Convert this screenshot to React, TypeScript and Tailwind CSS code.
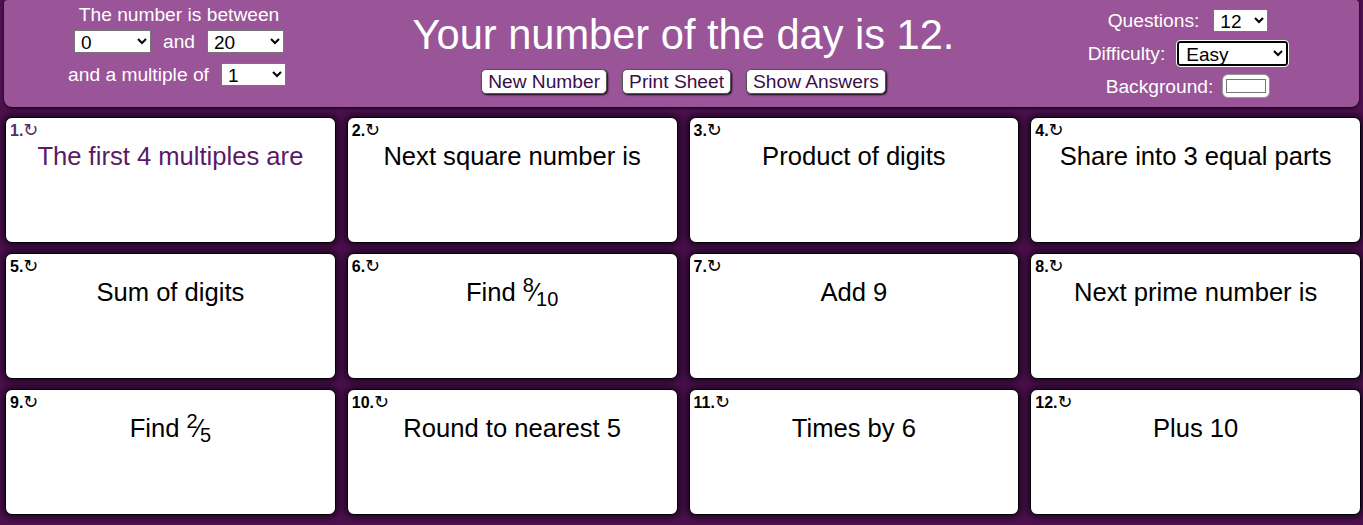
import React from 'react';

type Question = { text: React.ReactNode; active?: boolean };

// fraction like 8⁄10 with raised numerator and lowered denominator
function Frac({ n, d }: { n: number; d: number }) {
  return (
    <span>
      <span className="text-[20px] relative -top-[9px]">{n}</span>
      <span className="text-[25px] -mx-[1px]">&frasl;</span>
      <span className="text-[20px] relative top-[5px]">{d}</span>
    </span>
  );
}

const questions: Question[] = [
  { text: 'The first 4 multiples are', active: true },
  { text: 'Next square number is' },
  { text: 'Product of digits' },
  { text: 'Share into 3 equal parts' },
  { text: 'Sum of digits' },
  { text: <>Find <Frac n={8} d={10} /></> },
  { text: 'Add 9' },
  { text: 'Next prime number is' },
  { text: <>Find <Frac n={2} d={5} /></> },
  { text: 'Round to nearest 5' },
  { text: 'Times by 6' },
  { text: 'Plus 10' },
];

function Select({ value, options, className }: { value: string; options: string[]; className: string }) {
  return (
    <select
      defaultValue={value}
      className={`bg-white text-black text-[19px] leading-none h-[23px] pl-[2px] border border-[#767676] ${className}`}
    >
      {options.map((o) => (
        <option key={o}>{o}</option>
      ))}
    </select>
  );
}

function HeaderButton({ children }: { children: React.ReactNode }) {
  return (
    <button className="bg-white text-[#3b0f49] text-[19.2px] leading-[23px] px-[6px] rounded-[5px] border border-[#555] shadow-[1px_1px_2px_rgba(0,0,0,0.9)]">
      {children}
    </button>
  );
}

export default function App() {
  return (
    <div
      className="min-h-screen bg-[#4d1150] px-[4px] pb-2"
      style={{ fontFamily: '"Liberation Sans", Arial, sans-serif' }}
    >
      {/* Header */}
      <div className="grid grid-cols-[346px_1fr_342px] h-[107px] bg-[#995598] rounded-b-[8px] rounded-t-[4px] shadow-[0_1px_3px_rgba(0,0,0,0.9)] text-white text-[19.2px] leading-[23px]">
        <div className="flex flex-col items-center pt-[3px] pl-1">
          <div>The number is between</div>
          <div className="flex items-center gap-[12px] mt-[4px]">
            <Select value="0" options={['0', '10', '20']} className="w-[77px]" />
            <span>and</span>
            <Select value="20" options={['20', '50', '100']} className="w-[77px]" />
          </div>
          <div className="flex items-center gap-[12px] mt-[10px] -ml-1">
            <span>and a multiple of</span>
            <Select value="1" options={['1', '2', '5', '10']} className="w-[65px]" />
          </div>
        </div>

        <div className="flex flex-col items-center">
          <h1 className="text-[41.6px] leading-[46px] mt-[12px]">Your number of the day is 12.</h1>
          <div className="flex gap-[15px] mt-[11px]">
            <HeaderButton>New Number</HeaderButton>
            <HeaderButton>Print Sheet</HeaderButton>
            <HeaderButton>Show Answers</HeaderButton>
          </div>
        </div>

        <div className="flex flex-col items-center pt-[9px]">
          <div className="flex items-center gap-[14px]">
            <span>Questions:</span>
            <Select value="12" options={['4', '8', '12']} className="w-[55px]" />
          </div>
          <div className="flex items-center gap-[12px] mt-[9px]">
            <span>Difficulty:</span>
            <select
              defaultValue="Easy"
              className="bg-white text-black text-[19px] leading-none h-[25px] w-[111px] pl-[3px] border-2 border-black rounded-[3px] outline outline-1 outline-white"
            >
              <option>Easy</option>
              <option>Medium</option>
              <option>Hard</option>
            </select>
          </div>
          <div className="flex items-center gap-[9px] mt-[8px]">
            <span>Background:</span>
            <div className="w-[48px] h-[24px] bg-white rounded-[6px] border border-[#999] flex items-center justify-center">
              <div className="w-[40px] h-[14px] border border-[#777] bg-white" />
            </div>
          </div>
        </div>
      </div>

      {/* Question cards */}
      <div className="grid grid-cols-4 gap-x-[11px] gap-y-[10px] mt-[10px] ml-[1px] -mr-[2px]">
        {questions.map((q, i) => (
          <div
            key={i}
            className="h-[126px] bg-white rounded-[7px] border border-black shadow-[0_0_7px_3px_rgba(20,0,20,0.75)] px-[4px] pt-[2px]"
          >
            <div className={`text-[16px] font-bold leading-[20px] ${q.active ? 'text-[#5a2a66]' : 'text-black'}`}>
              {i + 1}.<span className="font-normal text-[18px]" style={{ fontFamily: '"DejaVu Sans", sans-serif' }}>↻</span>
            </div>
            <div
              className={`text-center text-[25.6px] leading-[30px] ${q.active ? 'text-[#5a1a66]' : 'text-black'}`}
            >
              {q.text}
            </div>
          </div>
        ))}
      </div>
    </div>
  );
}
